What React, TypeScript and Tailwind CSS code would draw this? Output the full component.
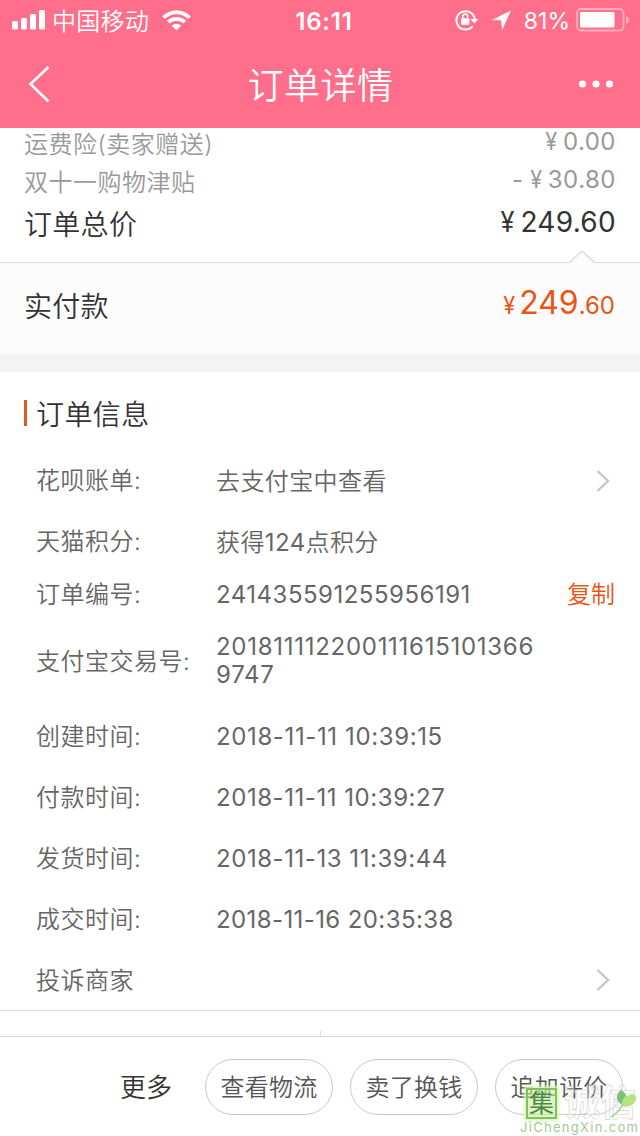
import type { ReactNode } from 'react';
import clsx from 'clsx';

interface InfoRow {
  label: string;
  value?: ReactNode;
  height?: string;
  valueClass?: string;
  copy?: boolean;
  arrow?: boolean;
}

const infoRows: InfoRow[] = [
  { label: '花呗账单:', value: '去支付宝中查看', valueClass: 'pt-0.5 tracking-[0.4px]', arrow: true },
  {
    label: '天猫积分:',
    value: <>获得<span className="font-normal">124</span>点积分</>,
    valueClass: 'pt-0.5 tracking-[0.4px]',
  },
  {
    label: '订单编号:',
    value: '241435591255956191',
    valueClass: 'pt-px font-normal tracking-[0.5px]',
    height: 'h-11',
    copy: true,
  },
  {
    label: '支付宝交易号:',
    value: '2018111122001116151013669747',
    valueClass: 'font-normal tracking-[0.72px]',
    height: 'h-[90px]',
  },
  { label: '创建时间:', value: '2018-11-11 10:39:15', valueClass: 'font-normal tracking-[0.62px]' },
  { label: '付款时间:', value: '2018-11-11 10:39:27', valueClass: 'font-normal tracking-[0.55px]' },
  { label: '发货时间:', value: '2018-11-13 11:39:44', valueClass: 'font-normal tracking-[0.55px]' },
  { label: '成交时间:', value: '2018-11-16 20:35:38', valueClass: 'font-normal tracking-[0.4px]' },
  { label: '投诉商家', arrow: true, height: 'h-[60px]' },
];

function StatusBar() {
  return (
    <div className="grid h-10 grid-cols-[1fr_auto_1fr] items-center pl-3 pr-2.5">
      <div className="flex items-center">
        <svg width="34" height="20" viewBox="0 0 34 20" fill="#fff">
          <rect x="0" y="11" width="6" height="8.5" rx="1.5" />
          <rect x="9" y="8" width="6" height="11.5" rx="1.5" />
          <rect x="18" y="4" width="6" height="15.5" rx="1.5" />
          <rect x="27" y="0" width="6" height="19.5" rx="1.5" />
        </svg>
        <span className="ml-1.5 pt-[3px] text-[24px] leading-[37px] tracking-[0.3px]">中国移动</span>
        <svg className="ml-[13px]" width="29" height="21" viewBox="0 0 29 21" fill="none" stroke="#fff" strokeWidth="3.8">
          <path d="M1.6 7.6a18.4 18.4 0 0 1 25.8 0" />
          <path d="M6.2 12.2a12 12 0 0 1 16.6 0" />
          <path d="M9.8 15.6a6.8 6.8 0 0 1 9.4 0l-4.7 4.9z" fill="#fff" stroke="none" />
        </svg>
      </div>
      <span className="pl-1.5 pt-[3px] text-[24px] font-semibold leading-[37px] tracking-[0.8px]">16:11</span>
      <div className="flex items-center justify-end">
        <svg width="24" height="22" viewBox="0 0 24 22" fill="none">
          <path d="M17.6 17.4A9.2 9.2 0 1 1 19.7 10" stroke="#fff" strokeWidth="2" />
          <path d="M15.4 10h7.8l-3.8 4.6z" fill="#fff" />
          <rect x="6" y="9.2" width="8.4" height="6.6" rx="0.8" fill="#fff" />
          <path d="M7.8 9.5V7.4a2.4 2.4 0 0 1 4.8 0v2.1" stroke="#fff" strokeWidth="1.5" />
        </svg>
        <svg className="ml-3" width="20" height="20" viewBox="0 0 20 20" fill="#fff">
          <path d="M20 .5 11.2 20 10 10.3.5 10.2z" />
        </svg>
        <span className="ml-[13px] pt-0.5 text-[23px] font-normal leading-[38px]">81%</span>
        <svg className="ml-1.5" width="54" height="24" viewBox="0 0 54 24">
          <rect x="1" y="1" width="46.5" height="21.5" rx="4" fill="none" stroke="#fff" strokeOpacity=".45" strokeWidth="1.8" />
          <rect x="4" y="4" width="34.5" height="15.5" rx="1.5" fill="#fff" />
          <path d="M50 8.2q3 .8 3 3.8t-3 3.8z" fill="#fff" fillOpacity=".45" />
        </svg>
      </div>
    </div>
  );
}

function NavBar() {
  return (
    <div className="flex h-[88px] items-center justify-between pl-[27px] pr-[26px]">
      <svg width="36" height="38" viewBox="0 0 36 38" fill="none" stroke="#fff" strokeWidth="2.6">
        <path d="M21.5 2 3.5 19l18 17.5" />
      </svg>
      <h1 className="pt-[3px] text-[36px] leading-[50px] tracking-[0.5px]">订单详情</h1>
      <svg width="36" height="8" viewBox="0 0 36 8" fill="#fff">
        <circle cx="4.5" cy="4" r="3.6" />
        <circle cx="18" cy="4" r="3.6" />
        <circle cx="31.5" cy="4" r="3.6" />
      </svg>
    </div>
  );
}

function PriceRow({ label, className, children }: { label: string; className: string; children: ReactNode }) {
  return (
    <div className={clsx('flex items-center justify-between pl-6 pr-6', className)}>
      <span>{label}</span>
      <span className="-mt-1.5 whitespace-pre font-normal [word-spacing:-2px]">{children}</span>
    </div>
  );
}

// narrow yen sign
function Yen() {
  return <span className="inline-block origin-right scale-x-90">¥</span>;
}

function Arrow() {
  return (
    <svg className="ml-auto mr-1" width="16" height="24" viewBox="0 0 16 24" fill="none" stroke="#c6c6c6" strokeWidth="2.4">
      <path d="m2.5 2 10.5 10L2.5 22" />
    </svg>
  );
}

function OrderInfo() {
  return (
    <section className="border-b border-[#dcdcdc] bg-white">
      <div className="flex h-[78px] items-center pl-6 pt-1">
        <i className="h-[26px] w-[3px] bg-[#dc5a1e]" />
        <h2 className="ml-[9px] pt-[3px] text-[28px] leading-10 tracking-[0.4px] text-[#333]">订单信息</h2>
      </div>
      {infoRows.map((row) => (
        <div
          key={row.label}
          className={clsx('flex items-center pl-9 pr-[25px] text-[24px] text-[#666]', row.height ?? 'h-[61px]')}
        >
          <span className="w-[180px] shrink-0 whitespace-nowrap pt-px tracking-[0.5px]">{row.label}</span>
          <span className={clsx('w-[325px] break-all leading-7', row.valueClass)}>{row.value}</span>
          {row.copy && <span className="ml-auto pt-0.5 text-[#ea5514]">复制</span>}
          {row.arrow && <Arrow />}
        </div>
      ))}
    </section>
  );
}

function Watermark() {
  return (
    <div className="absolute bottom-0 right-0 h-[50px] w-[120px]">
      <div className="flex items-start pl-1.5 pt-0.5">
        <div className="flex size-[31px] items-center justify-center border-2 border-[#86bf62] bg-[#c6f09c]/60 text-[25px] font-normal leading-none text-[#4c8a44] shadow-[0_0_3px_2px_#d8f7b8]">
          集
        </div>
        <span className="ml-[7px] text-[36px] font-bold leading-[31px] text-white/30 [-webkit-text-stroke:0.6px_#cfcfcf]">
          诚信
        </span>
      </div>
      <svg className="absolute right-0.5 top-0.5" width="28" height="34" viewBox="0 0 28 34">
        <path d="M12 17C6 13 5 6 11 2c7 4 7 10 1 15z" fill="#7cc077" />
        <path d="M12 18C11 13 14 8 18 8c3-3 8-2 8 1 1 6-6 11-14 9z" fill="#b4e47c" />
        <path d="M13 16Q9 24 1 29" stroke="#a2d880" strokeWidth="1.5" fill="none" />
      </svg>
      <div className="whitespace-nowrap text-[13px] font-normal leading-[17px] tracking-[1.3px] text-[#a3c896]">
        JiChengXin.com
      </div>
    </div>
  );
}

export default function App() {
  return (
    <main className="relative flex h-[1136px] w-[640px] flex-col overflow-hidden bg-white font-['Inter','Noto_Sans_CJK_SC',sans-serif] font-[350]">
      <header className="bg-[#ff6e8a] text-white">
        <StatusBar />
        <NavBar />
      </header>

      <section className="h-[134px] bg-white">
        <PriceRow label="运费险(卖家赠送)" className="h-[33px] text-[24px] tracking-[0.5px] text-[#999]">
          <Yen /> 0.00
        </PriceRow>
        <PriceRow label="双十一购物津贴" className="h-[43px] text-[24px] tracking-[0.5px] text-[#999]">
          - <Yen /> 30.80
        </PriceRow>
        <PriceRow label="订单总价" className="h-[42px] text-[28px] tracking-[0.3px] text-[#333]">
          <Yen /> 249.60
        </PriceRow>
      </section>

      <section className="relative h-[92px] border-t border-[#dedede] bg-[#fcfcfc]">
        <svg className="absolute -top-[13px] left-[568px]" width="28" height="14" viewBox="0 0 28 14">
          <path d="M1 13 14 1l13 12v1H1z" fill="#fcfcfc" />
          <path d="M1 13 14 1l13 12" fill="none" stroke="#d8d8d8" strokeWidth="1.2" />
        </svg>
        <div className="flex h-[87px] items-center justify-between pl-6 pr-[25px] text-[28px] text-[#333]">
          <span className="tracking-[0.3px]">实付款</span>
          <span className="-mt-2 flex items-baseline text-[24px] font-normal text-[#ea5514]">
            <span className="mr-1">
              <Yen />
            </span>
            <span className="text-[32px]">249</span>
            <span>.60</span>
          </span>
        </div>
      </section>

      <div className="h-[18px] bg-[#f3f3f3]" />

      <OrderInfo />

      <div className="flex h-[25px] items-end justify-center">
        <i className="h-[5px] w-px bg-[#dcdcdc]" />
      </div>

      <footer className="flex h-[100px] items-center border-t border-[#dcdcdc] pl-[120px] text-[24px] text-[#555]">
        <span className="w-[85px] pt-0.5 text-[26px] text-[#333]">更多</span>
        <div className="flex gap-[17px]">
          {['查看物流', '卖了换钱', '追加评价'].map((text) => (
            <button
              key={text}
              className="h-14 w-32 whitespace-nowrap rounded-full border border-[#c8c8c8] bg-white pt-0.5 tracking-[0.3px]"
            >
              {text}
            </button>
          ))}
        </div>
      </footer>

      <Watermark />
    </main>
  );
}
